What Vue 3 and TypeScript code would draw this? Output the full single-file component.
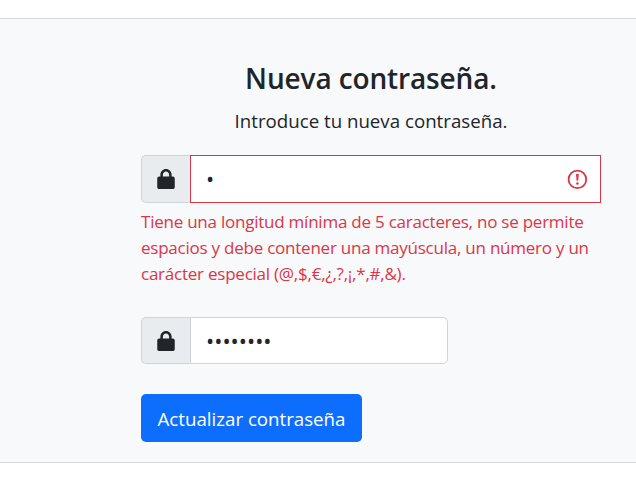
<script setup lang="ts">
import { ref } from 'vue'

const newPassword = ref<string>('•')
const repeatedPassword = ref<string>('••••••••')
const errorLines: string[] = [
  'Tiene una longitud mínima de 5 caracteres, no se permite',
  'espacios y debe contener una mayúscula, un número y un',
  'carácter especial (@,$,€,¿,?,¡,*,#,&).',
]
const lockPath =
  'M144 144v48h160v-48c0-44.200-35.800-80-80-80s-80 35.800-80 80zM80 192v-48C80 64.500 144.500 0 224 0s144 64.500 144 144v48h32c26.500 0 48 21.500 48 48v224c0 26.500-21.500 48-48 48H48c-26.500 0-48-21.500-48-48V240c0-26.500 21.500-48 48-48h32z'
</script>

<template>
  <main class="panel">
    <form class="form" @submit.prevent>
      <h1 class="title">Nueva contraseña.</h1>
      <p class="subtitle">Introduce tu nueva contraseña.</p>

      <div class="group invalid">
        <span class="addon">
          <svg class="lock" viewBox="0 0 448 512"><path :d="lockPath" /></svg>
        </span>
        <div class="field">
          <span class="dots">{{ newPassword }}</span>
          <svg class="alert" viewBox="0 0 20 20">
            <circle cx="10.4" cy="10.4" r="8.8" />
            <path d="M9 5h2.800l-.6 6.800H9.600z" />
            <circle class="point" cx="10.4" cy="14.4" r="1.25" />
          </svg>
        </div>
      </div>
      <div class="error">
        <span v-for="(line, i) in errorLines" :key="i">{{ line }}</span>
      </div>

      <div class="group second">
        <span class="addon">
          <svg class="lock" viewBox="0 0 448 512"><path :d="lockPath" /></svg>
        </span>
        <div class="field">
          <span class="dots">{{ repeatedPassword }}</span>
        </div>
      </div>

      <button class="submit" type="submit">Actualizar contraseña</button>
    </form>
  </main>
</template>

<style>
body {
  background: #fff;
  overflow: hidden;
}
</style>

<style scoped>
.panel {
  box-sizing: border-box;
  height: 445px;
  margin-top: 18px;
  padding: 38px 35px 0 141px;
  border-top: 1px solid #d5d8dc;
  border-bottom: 1px solid #d5d8dc;
  background: #f8f9fb;
  color: #212529;
  font-family: 'Open Sans', 'Noto Sans', sans-serif;
  font-size: 18.7px;
  font-weight: 400;
}
.form {
  display: flex;
  flex-direction: column;
  align-items: flex-start;
}
.title,
.subtitle {
  align-self: stretch;
  margin: 0;
  text-align: center;
  white-space: nowrap;
}
.title {
  height: 49px;
  font-size: 28px;
  font-weight: 600;
  letter-spacing: -0.13px;
  line-height: 42px;
}
.subtitle {
  height: 49px;
  line-height: 30px;
}
.group {
  box-sizing: border-box;
  display: flex;
  width: 460px;
  height: 48px;
}
.addon {
  box-sizing: border-box;
  display: flex;
  align-items: center;
  width: 49px;
  padding-left: 15px;
  border: 1px solid #ced4da;
  border-right: 0;
  border-radius: 5px 0 0 5px;
  background: #e9ecef;
}
.lock {
  width: 18px;
  height: 20px;
  fill: #212529;
}
.field {
  box-sizing: border-box;
  display: flex;
  flex: 1;
  align-items: center;
  justify-content: space-between;
  padding: 0 13px 0 15px;
  border: 1px solid #ced4da;
  border-radius: 0 5px 5px 0;
  background: #fff;
}
.invalid .field {
  border-color: #dc3545;
  border-radius: 0;
}
.dots {
  font-size: 21.8px;
  line-height: 30px;
}
.alert {
  width: 20px;
  height: 20px;
  overflow: visible;
  fill: #dc3545;
}
.alert circle {
  fill: none;
  stroke: #dc3545;
  stroke-width: 1.8;
}
.alert .point {
  fill: #dc3545;
  stroke: none;
}
.error {
  display: flex;
  flex-direction: column;
  align-items: flex-start;
  height: 108px;
  margin-top: 6px;
  color: #dc3545;
  font-size: 17px;
  letter-spacing: -0.235px;
  line-height: 26px;
  white-space: nowrap;
}
.second {
  width: 307px;
  height: 47px;
}
.submit {
  height: 48px;
  width: 221px;
  margin: 30px 0 0;
  padding: 0;
  border: 0;
  border-radius: 5px;
  background: #0d6efd;
  color: #fff;
  font: inherit;
  white-space: nowrap;
}
</style>
